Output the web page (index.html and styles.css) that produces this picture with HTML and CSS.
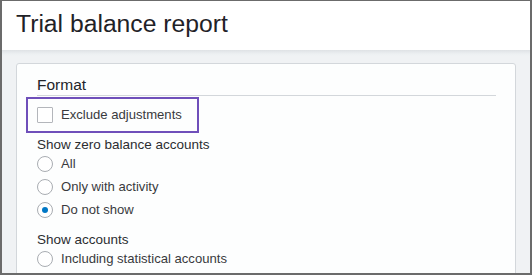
FILE: index.html
```html
<!DOCTYPE html>
<html lang="en">

<head>
	<meta charset="UTF-8">
	<title>Trial balance report</title>
	<link rel="stylesheet" href="styles.css">
</head>

<body>

	<div class="frame">
		<div class="page-head">
			<h1>Trial balance report</h1>
		</div>

		<div class="page-body">
			<div class="card">
				<div class="section-title">Format</div>

				<div class="check-row">
					<span class="checkbox"></span>
					<label>Exclude adjustments</label>
					<!-- 高亮框 -->
					<div class="highlight"></div>
				</div>

				<div class="group-title">Show zero balance accounts</div>
				<div class="radio-list">
					<div class="radio-row">
						<span class="radio"></span>
						<label>All</label>
					</div>
					<div class="radio-row">
						<span class="radio"></span>
						<label>Only with activity</label>
					</div>
					<div class="radio-row">
						<span class="radio checked"></span>
						<label>Do not show</label>
					</div>
				</div>

				<div class="group-title">Show accounts</div>
				<div class="radio-list">
					<div class="radio-row">
						<span class="radio"></span>
						<label>Including statistical accounts</label>
					</div>
				</div>
			</div>
		</div>
	</div>

</body>

</html>
```

FILE: styles.css
```css
* {
	margin: 0;
	padding: 0;
	box-sizing: border-box;
}

body {
	font-family: "Liberation Sans", Arial, sans-serif;
	color: #393a3d;
}

.frame {
	width: 532px;
	height: 275px;
	overflow: hidden;
	border: 2px solid #6b6b6b;
	border-top-width: 1px;
	background: #f0f2f4;
}

.page-head {
	height: 49px;
	padding: 8px 14px 0;
	background: #fff;
}

.page-head h1 {
	font-size: 24.7px;
	line-height: 30px;
	font-weight: normal;
	color: #1f2227;
}

.page-body {
	padding: 13px 14px 0 14px;
	background: linear-gradient(#dfe2e5, #edf0f2 4px, #f0f2f4 6px);
}

.card {
	height: 260px;
	padding: 11px 19px 0 20px;
	background: #fdfefe;
	border: 1px solid #d3d7db;
	border-radius: 3px;
}

.section-title {
	font-size: 15.5px;
	line-height: 20px;
	color: #232529;
	border-bottom: 1px solid #d3d7db;
}

.check-row {
	position: relative;
	display: flex;
	align-items: center;
	height: 16px;
	margin-top: 11px;
}

.checkbox {
	width: 16px;
	height: 16px;
	border: 1px solid #b3b6bb;
	border-radius: 1px;
	background: #fff;
}

.check-row label,
.radio-row label {
	margin-left: 8px;
	font-size: 13.1px;
	line-height: 16px;
}

.highlight {
	position: absolute;
	left: -11px;
	top: -10px;
	width: 173px;
	height: 36px;
	border: 2px solid #6f4fba;
}

.group-title {
	margin-top: 14px;
	font-size: 13.5px;
	line-height: 16px;
	color: #2b2d31;
}

.radio-list {
	display: flex;
	flex-direction: column;
	gap: 7px;
	margin-top: 3px;
}

.radio-row {
	display: flex;
	align-items: center;
	height: 16px;
}

.radio {
	display: flex;
	align-items: center;
	justify-content: center;
	width: 16px;
	height: 16px;
	border: 1px solid #a9adb2;
	border-radius: 50%;
	background: #fff;
}

.radio.checked::after {
	content: "";
	width: 6px;
	height: 6px;
	border-radius: 50%;
	background: #0077c5;
}
```
